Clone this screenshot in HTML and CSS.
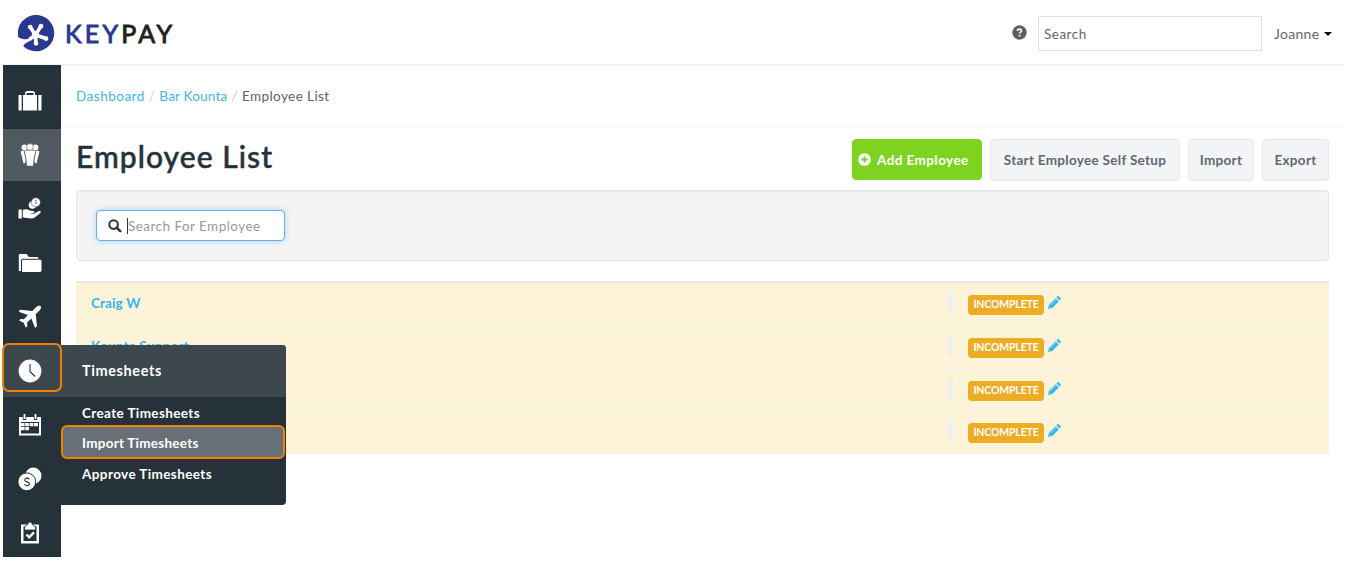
FILE: index.html
```html
<!DOCTYPE html>
<html lang="en">
<head>
<meta charset="utf-8">
<title>Employee List</title>
<link rel="stylesheet" href="styles.css">
</head>
<body>
<header class="topbar">
  <a class="logo">
    <svg width="37" height="37" viewBox="0 0 37 37">
      <path fill="#2b388f" d="M.3 22.200A18.200 18.200 0 1 1 5.600 31.400C5 28.500 11 27.500 15 23C10 24.500 5 25 .3 22.200Z"/>
      <g stroke="#fff" stroke-linecap="round" fill="none">
        <path stroke-width="3.600" d="M17.500 20L12.300 12.300M17.500 20L22.800 11.300M17.500 20L28 23.500M17.500 20L18 28.500M17.500 20L12 24"/>
        <path stroke-width="4.800" d="M12.200 12.100h.01M23 11.200h.01M28 23.600h.01M18 28.300h.01"/>
      </g>
      <circle cx="17.300" cy="19.800" r="3.500" fill="#fff"/>
    </svg>
    <span class="logo-text"><span class="logo-key">KEY</span>PAY</span>
  </a>
  <svg class="help" width="15" height="15" viewBox="0 0 15 15"><circle cx="7.500" cy="7.500" r="7.200" fill="#5e5e5e"/><path d="M5.400 5.900C5.400 3.500 9.500 3.500 9.500 5.800C9.500 7.200 7.600 7.100 7.600 8.600" fill="none" stroke="#fff" stroke-width="1.600"/><path d="M6.700 9.700h1.800v1.700H6.700z" fill="#fff"/></svg>
  <div class="search">Search</div>
  <div class="user">Joanne<i class="caret"></i></div>
</header>
<div class="layout">
  <nav class="sidebar">
    <a class="nav-item"><svg width="24" height="24" viewBox="0 0 24 24" fill="#fff"><path d="M.5 6h3.200v15.500H.5zM20.300 6h3.200v15.500h-3.200zM5 6h2V4.300C7 3 8 2 9.300 2h5.400C16 2 17 3 17 4.300V6h2v15.500H5zM8.500 4v2h7V4z"/></svg></a>
    <a class="nav-item nav-item--active"><svg width="24" height="24" viewBox="0 0 24 24" fill="#fff"><circle cx="6.500" cy="4.500" r="2.900"/><circle cx="17.500" cy="4.500" r="2.900"/><path d="M2.500 8.500q1-1 3.300-.800l1.800 9.500-.600 3H5.400L4 14zM21.500 8.500q-1-1-3.300-.800l-1.800 9.500.6 3h1.600L20 14z"/><path d="M6.600 8q5.400-1.600 10.800 0l-1.600 7-.8 7.700H9L8.200 15z"/><circle cx="12" cy="4" r="3.400" stroke="#50595f" stroke-width=".6"/></svg></a>
    <a class="nav-item"><svg width="24" height="24" viewBox="0 0 24 24" fill="#fff"><path d="M.5 12.500h3.300v9H.5zM4.800 13c3-1.500 5-.7 7 .6l3.500.4c1.600.3 1.500 2.100 0 2.200l-4-.1 4 .9 5.700-3c1.500-.5 2.400.9 1.400 1.900l-6 4.900c-3 1.400-7.500.2-11.600-.6z"/><circle cx="14.500" cy="8" r="3.800"/><circle cx="17.800" cy="5.300" r="4.600" stroke="#26323a" stroke-width=".5"/><path d="M18.800 3.700c-2-1-2.300 1-1 1.400s1 2.200-1 1.200" fill="none" stroke="#26323a" stroke-width=".6"/></svg></a>
    <a class="nav-item"><svg width="24" height="24" viewBox="0 0 24 24" fill="#fff"><path d="M.8 20V4.300Q.8 3 2.100 3h6.500l2.200 3h8.400q1.300 0 1.300 1.700H4.900Q3 7.700 3 9.600V20z"/><path d="M4 9.900q0-1.200 1.200-1.200h17q1.300 0 1.300 1.200v9.700q0 1.300-1.300 1.300H4z"/></svg></a>
    <a class="nav-item"><svg width="24" height="24" viewBox="0 0 24 24" fill="#fff"><path d="M22.500 1c1 .8.400 3-.8 4.200l-4 4 1.300 12.300-2 1.300-3.700-9.200-4.200 4 .3 3.600-1.700 1.200-2-4.600-4.500-2L2.400 14l3.500.3 4-4.200-9-3.400 1-2L14.300 6l4-4c1.200-1.200 3.300-1.700 4.200-1z"/></svg></a>
    <div class="nav-item nav-item--open"><svg width="24" height="24" viewBox="0 0 24 24"><circle cx="12" cy="12" r="11.400" fill="#fff"/><path d="M12 5v7.500l5 5" fill="none" stroke="#26323a" stroke-width="1.100"/></svg>
      <div class="flyout">
        <div class="flyout-title">Timesheets</div>
        <div class="flyout-list">
          <a class="flyout-link">Create Timesheets</a>
          <a class="flyout-link flyout-link--active">Import Timesheets</a>
          <a class="flyout-link approve">Approve Timesheets</a>
        </div>
      </div>
    </div>
    <a class="nav-item"><svg width="24" height="24" viewBox="0 0 24 24"><path fill="#fff" d="M1 4h22v18.500H1z"/><path fill="#26323a" d="M3 9h18v11.500H3z"/><g stroke="#26323a" stroke-width="3.400"><path d="M6.500 1v6M17.500 1v6"/></g><path stroke="#fff" stroke-width="1.800" d="M6.500 1v5M17.500 1v5"/><path fill="#fff" d="M3 10h3.600v3.200H3zM7.300 10h3.600v3.200H7.300zM11.600 10h3.600v3.200h-3.600zM15.900 10h4v3.200h-4zM3 14h3.600v3.200H3zM7.300 14h3.600v3.200H7.300z"/></svg></a>
    <a class="nav-item"><svg width="24" height="24" viewBox="0 0 24 24"><circle cx="15.300" cy="8.800" r="8.200" fill="#fff"/><circle cx="8.800" cy="14.800" r="8.900" fill="#fff" stroke="#26323a" stroke-width="1"/><path d="M11.300 12.500C10.500 10.500 6.700 10.800 6.700 13c0 2.400 4.800 1.300 4.800 3.800 0 2.200-4 2.200-5 .2M9 10v1.500M9 18v1.600" fill="none" stroke="#26323a" stroke-width="1.100"/></svg></a>
    <a class="nav-item"><svg width="24" height="24" viewBox="0 0 24 24"><path fill="#fff" d="M3 3.500h18v19H3z"/><path fill="#26323a" d="M5.500 5.500h13V20h-13z"/><path fill="#fff" stroke="#26323a" stroke-width=".8" d="M6.500 9V5.700L9.500 4q.4-3 2.500-3t2.500 3l3 1.700V9z"/><path d="M8.500 13.500l2.700 2.800 4.800-5" fill="none" stroke="#fff" stroke-width="2.400"/></svg></a>
  </nav>
  <main class="main">
    <div class="breadcrumb"><a class="crumb dash">Dashboard</a><span class="sep">/</span><a class="crumb">Bar Kounta</a><span class="sep">/</span><span class="here">Employee List</span></div>
    <div class="content">
      <div class="title-row">
        <h1 class="title">Employee List</h1>
        <a class="btn btn--add"><svg width="13" height="13" viewBox="0 0 13 13"><circle cx="6.500" cy="6.500" r="6.300" fill="#fff"/><path d="M6.500 3.200v6.600M3.200 6.500h6.600" stroke="#7ed321" stroke-width="1.900"/></svg><span>Add Employee</span></a>
        <a class="btn btn--setup"><span>Start Employee Self Setup</span></a>
        <a class="btn btn--import"><span>Import</span></a>
        <a class="btn btn--export"><span>Export</span></a>
      </div>
      <div class="well">
        <div class="filter"><svg width="14" height="14" viewBox="0 0 14 14"><circle cx="5.600" cy="5.600" r="4.300" fill="none" stroke="#333" stroke-width="2"/><path d="M8.700 8.700l3.500 3.500" stroke="#333" stroke-width="2.600" stroke-linecap="round"/></svg><span class="placeholder">Search For Employee</span></div>
      </div>
      <div class="table">
        <div class="row"><a class="name craig">Craig W</a><i class="bar-mark"></i><span class="badge">INCOMPLETE</span><svg class="pencil" width="13" height="13" viewBox="0 0 13 13"><path fill="#2fb9f5" d="M0 13l1-4.200L7.600 2.200l3.200 3.200L4.200 12zM8.400 1.400L9.300.5q.8-.8 1.600 0l1.600 1.600q.8.800 0 1.600l-.9.900z"/><path d="M2.300 8.900l5.400-5.300M1.500 11.400l.8.300" stroke="#c9dce0" stroke-width=".9"/></svg></div>
        <div class="row"><a class="name">Kounta Support</a><i class="bar-mark"></i><span class="badge">INCOMPLETE</span><svg class="pencil" width="13" height="13" viewBox="0 0 13 13"><path fill="#2fb9f5" d="M0 13l1-4.200L7.600 2.200l3.200 3.200L4.200 12zM8.400 1.400L9.300.5q.8-.8 1.600 0l1.600 1.600q.8.800 0 1.600l-.9.900z"/><path d="M2.300 8.900l5.400-5.300M1.500 11.400l.8.300" stroke="#c9dce0" stroke-width=".9"/></svg></div>
        <div class="row"><a class="name"></a><i class="bar-mark"></i><span class="badge">INCOMPLETE</span><svg class="pencil" width="13" height="13" viewBox="0 0 13 13"><path fill="#2fb9f5" d="M0 13l1-4.200L7.600 2.200l3.200 3.200L4.200 12zM8.400 1.400L9.300.5q.8-.8 1.600 0l1.600 1.600q.8.800 0 1.600l-.9.900z"/><path d="M2.300 8.900l5.400-5.300M1.500 11.400l.8.300" stroke="#c9dce0" stroke-width=".9"/></svg></div>
        <div class="row"><a class="name"></a><i class="bar-mark"></i><span class="badge">INCOMPLETE</span><svg class="pencil" width="13" height="13" viewBox="0 0 13 13"><path fill="#2fb9f5" d="M0 13l1-4.200L7.600 2.200l3.200 3.200L4.200 12zM8.400 1.400L9.300.5q.8-.8 1.600 0l1.600 1.600q.8.800 0 1.600l-.9.900z"/><path d="M2.300 8.900l5.400-5.300M1.500 11.400l.8.300" stroke="#c9dce0" stroke-width=".9"/></svg></div>
      </div>
    </div>
  </main>
</div>
</body>
</html>
```
FILE: styles.css
```css
* { box-sizing: border-box; }
body { margin: 0; padding: 0 5px 0 3px; height: 563px; overflow: hidden; background: #fff; color: #666; font: 13.5px/18px Lato, "Open Sans", sans-serif; }
svg { display: block; flex: none; }

.topbar { display: flex; align-items: center; height: 66px; border-bottom: 2px solid #f0f0f1; padding: 3px 10px 0 15px; }
.logo { display: flex; align-items: center; gap: 10px; margin-right: auto; }
.logo-text { margin-top: -1px; font: 400 25px/28px Lato, sans-serif; letter-spacing: 3.200px; color: #231f20; -webkit-text-stroke: .9px #231f20; }
.logo-key { color: #2b388f; -webkit-text-stroke-color: #2b388f; }
.help { margin: -2px 11px 0 0; }
.search { width: 224px; height: 35px; margin-right: 12px; border: 1px solid #dbe2e5; padding: 8px 5px 0; font-size: 13.500px; letter-spacing: .5px; }
.user { display: flex; align-items: center; width: 59px; justify-content: space-between; white-space: nowrap; font-size: 14px; letter-spacing: .3px; }
.caret { margin-right: 1px; border: 4px solid transparent; border-top-color: #000; border-bottom: 0; }

.layout { display: flex; margin-top: -1px; }
.sidebar { position: relative; z-index: 1; width: 58px; height: 492px; padding-top: 10px; background: #26323a; flex: none; }
.nav-item { display: flex; align-items: center; justify-content: center; height: 52px; margin-bottom: 2px; padding-right: 4px; }
.nav-item--active { background: #50595f; }
.nav-item--open { position: relative; background: #3c474e; }
.nav-item--open::after { content: ""; position: absolute; inset: -2px -1px 5px -1px; border: 2px solid #f77f00; border-radius: 7px; z-index: 2; }

.flyout { position: absolute; left: 58px; top: 0; width: 225px; height: 160px; border-radius: 0 4px 4px 0; background: #26323a; overflow: hidden; color: #fff; font-weight: 700; }
.flyout-title { height: 52px; padding: 17px 21px 0; background: #3c474e; font-size: 14.500px; letter-spacing: .6px; }
.flyout-list { padding-top: 1px; }
.flyout-link { display: block; height: 27px; padding: 6px 21px 0; font-size: 13.500px; letter-spacing: .38px; }
.flyout-link--active { height: 34px; border: 2px solid #f77f00; border-radius: 6px; background: #677077; padding: 7px 19px 0; width: 224px; letter-spacing: .25px; }
.approve { letter-spacing: .4px; }

.main { flex: 1; min-width: 0; }
.breadcrumb { display: flex; align-items: center; height: 62px; border-bottom: 1px solid #f3f3f4; padding: 0 15px; color: #5c6269; font-size: 13.500px; letter-spacing: .42px; }
.crumb { color: #41b5ea; letter-spacing: .2px; }
.dash { letter-spacing: .5px; }
.sep { color: #ccc; margin: 0 4px; }
.content { padding: 12px 14px 0 15px; }
.title-row { display: flex; height: 51px; align-items: flex-start; gap: 8px; }
.title { margin: -1px auto 0 0; font: 500 30px/36px Lato, sans-serif; letter-spacing: 1.050px; color: #26323a; -webkit-text-stroke: .5px #26323a; white-space: nowrap; }
.btn { display: flex; align-items: center; justify-content: center; height: 41px; border: 1px solid #e6e9ec; border-radius: 4px; background: #f3f4f6; color: #626870; font-weight: 700; font-size: 13.500px; letter-spacing: .3px; white-space: nowrap; box-shadow: 0 1px 2px #eceef0; }
.btn--add { width: 130px; justify-content: flex-start; gap: 6px; padding-left: 5px; background: #7ed321; border-color: #7ed321; color: #fff; box-shadow: none; letter-spacing: .42px; }
.btn--setup { width: 190px; }
.btn--import { width: 66px; }
.btn--export { width: 67px; }
.well { height: 71px; border: 1px solid #e3e4e5; border-radius: 4px; background: #f4f4f4; padding: 19px; box-shadow: inset 0 1px 1px #ececec; }
.filter { display: flex; align-items: center; width: 189px; height: 31px; border: 1px solid #66afe9; border-radius: 4px; background: #fff; box-shadow: 0 0 6px #a5d3f5; padding-left: 11px; }
.placeholder { margin-left: 5px; border-left: 1px solid #333; color: #999; line-height: 16px; letter-spacing: .46px; white-space: nowrap; }
.table { margin-top: 20px; border-top: 2px solid #e8e6e2; }
.row { display: flex; height: 42.800px; border-bottom: 1.500px solid #f4f1e9; background: #fcf3d9; padding: 0 0 0 15px; }
.name { width: 857px; padding-top: 11px; color: #35b5ed; font-weight: 700; font-size: 13.500px; letter-spacing: .22px; white-space: nowrap; }
.craig { letter-spacing: .12px; }
.bar-mark { width: 5px; height: 20px; margin-top: 10px; background: #eee; }
.badge { width: 76px; height: 20px; margin: 12px 4px 0 15px; border-radius: 4px; background: #eeab24; color: #fff; font: 700 10.500px/19px Lato, sans-serif; letter-spacing: -.15px; text-align: center; }
.pencil { margin-top: 13px; }
```
